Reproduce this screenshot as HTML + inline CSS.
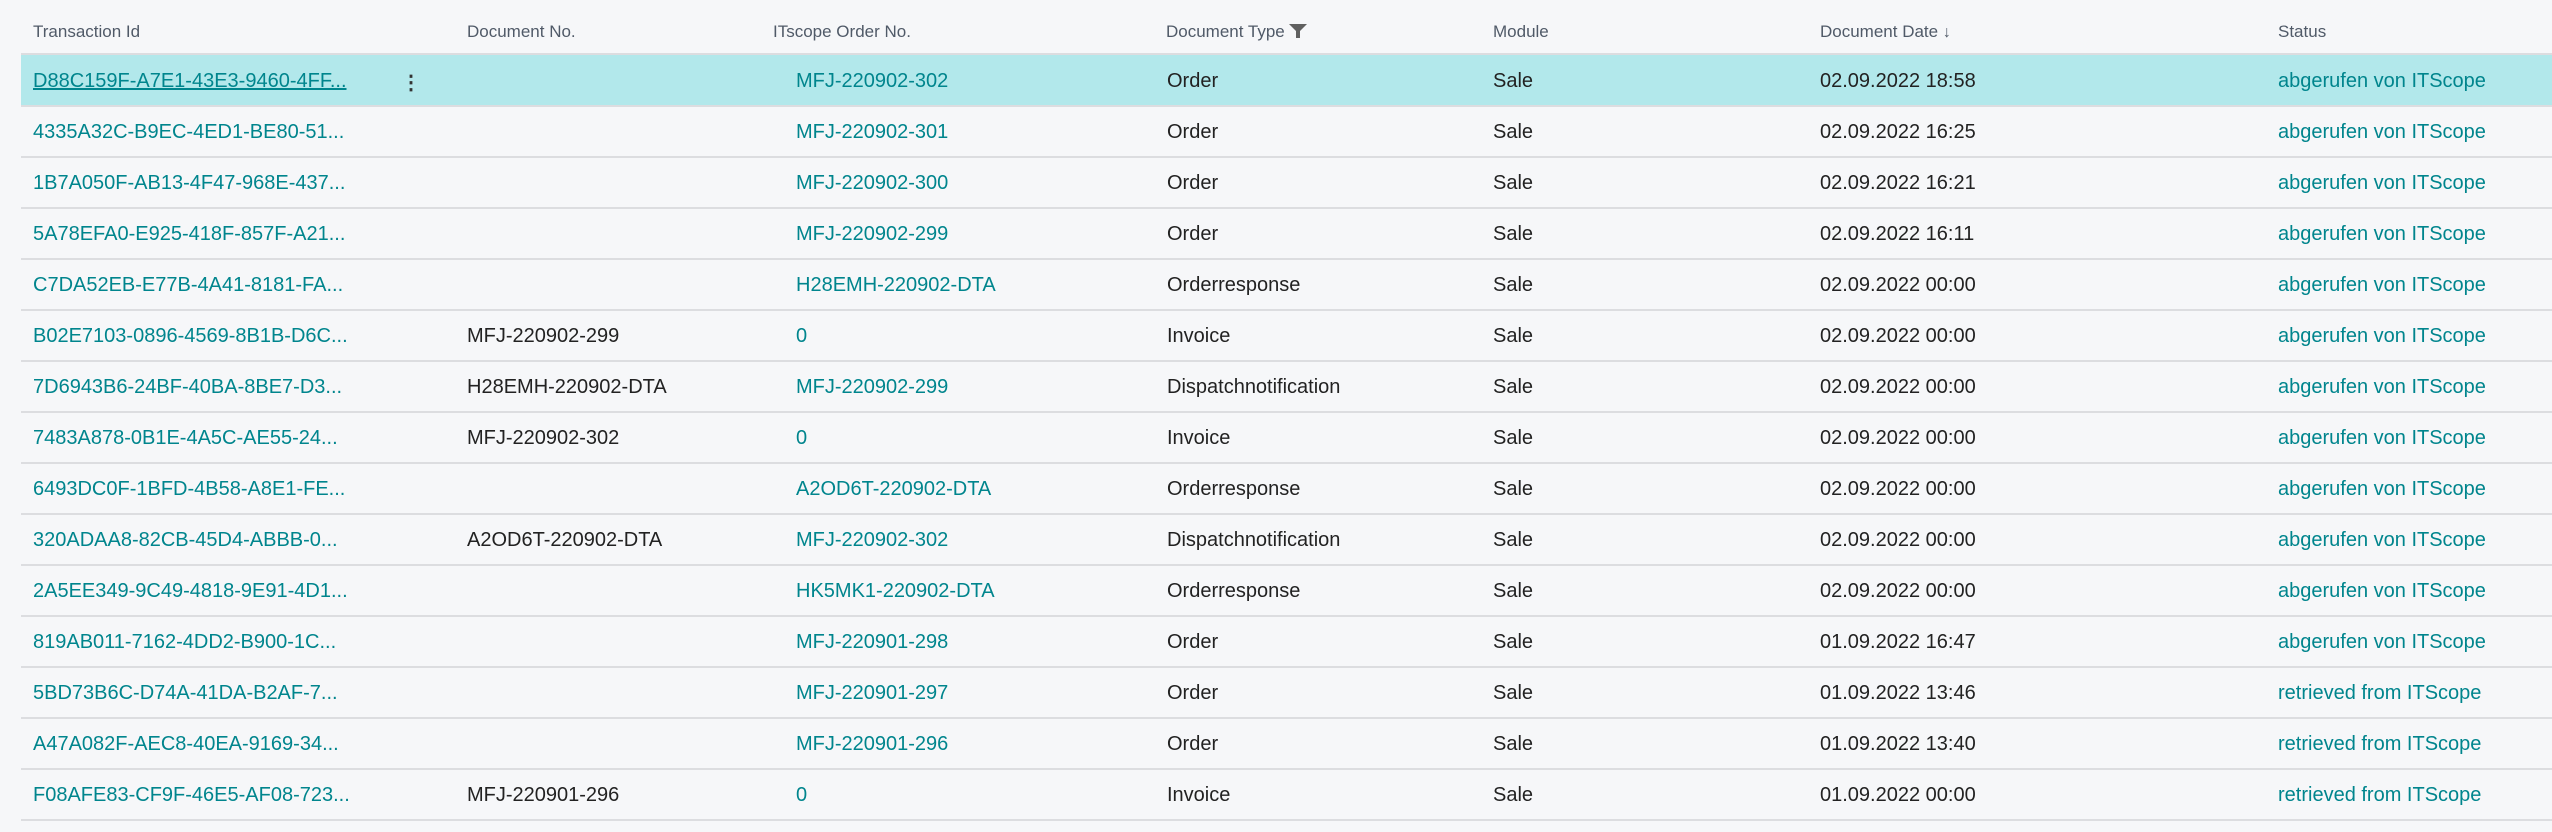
<!DOCTYPE html>
<html><head><meta charset="utf-8"><style>
body{margin:0;width:2552px;height:832px;background:#f6f7f9;font-family:"Liberation Sans",sans-serif;overflow:hidden;position:relative}
.h{position:absolute;top:22px;font-size:17px;color:#505a68}
.r{position:absolute;left:21px;right:0;height:50px;border-bottom:2px solid #dcdde0}
.c{position:absolute;top:15px;font-size:20px;color:#222;white-space:nowrap}
.t{color:#00858d}
.sel{background:#b2e8eb}
</style></head><body>
<div class="h" style="left:33px">Transaction Id</div>
<div class="h" style="left:467px">Document No.</div>
<div class="h" style="left:773px">ITscope Order No.</div>
<div class="h" style="left:1166px">Document Type <svg width="18" height="14" viewBox="0 0 18 14" style="vertical-align:-1px"><path d="M0 0H18L11 7V14H7V7Z" fill="#606060"/></svg></div>
<div class="h" style="left:1493px">Module</div>
<div class="h" style="left:1820px">Document Date <span style="font-size:16px">&#8595;</span></div>
<div class="h" style="left:2278px">Status</div>
<div style="position:absolute;left:21px;right:0;top:53px;border-top:2px solid #dcdde0"></div>
<div id="rows"></div>
<script>
var d=[
["D88C159F-A7E1-43E3-9460-4FF...","","MFJ-220902-302","Order","02.09.2022 18:58","abgerufen von ITScope"],
["4335A32C-B9EC-4ED1-BE80-51...","","MFJ-220902-301","Order","02.09.2022 16:25","abgerufen von ITScope"],
["1B7A050F-AB13-4F47-968E-437...","","MFJ-220902-300","Order","02.09.2022 16:21","abgerufen von ITScope"],
["5A78EFA0-E925-418F-857F-A21...","","MFJ-220902-299","Order","02.09.2022 16:11","abgerufen von ITScope"],
["C7DA52EB-E77B-4A41-8181-FA...","","H28EMH-220902-DTA","Orderresponse","02.09.2022 00:00","abgerufen von ITScope"],
["B02E7103-0896-4569-8B1B-D6C...","MFJ-220902-299","0","Invoice","02.09.2022 00:00","abgerufen von ITScope"],
["7D6943B6-24BF-40BA-8BE7-D3...","H28EMH-220902-DTA","MFJ-220902-299","Dispatchnotification","02.09.2022 00:00","abgerufen von ITScope"],
["7483A878-0B1E-4A5C-AE55-24...","MFJ-220902-302","0","Invoice","02.09.2022 00:00","abgerufen von ITScope"],
["6493DC0F-1BFD-4B58-A8E1-FE...","","A2OD6T-220902-DTA","Orderresponse","02.09.2022 00:00","abgerufen von ITScope"],
["320ADAA8-82CB-45D4-ABBB-0...","A2OD6T-220902-DTA","MFJ-220902-302","Dispatchnotification","02.09.2022 00:00","abgerufen von ITScope"],
["2A5EE349-9C49-4818-9E91-4D1...","","HK5MK1-220902-DTA","Orderresponse","02.09.2022 00:00","abgerufen von ITScope"],
["819AB011-7162-4DD2-B900-1C...","","MFJ-220901-298","Order","01.09.2022 16:47","abgerufen von ITScope"],
["5BD73B6C-D74A-41DA-B2AF-7...","","MFJ-220901-297","Order","01.09.2022 13:46","retrieved from ITScope"],
["A47A082F-AEC8-40EA-9169-34...","","MFJ-220901-296","Order","01.09.2022 13:40","retrieved from ITScope"],
["F08AFE83-CF9F-46E5-AF08-723...","MFJ-220901-296","0","Invoice","01.09.2022 00:00","retrieved from ITScope"]];
var h="";
d.forEach(function(r,i){
var top=55+i*51;
h+='<div class="r'+(i==0?' sel':'')+'" style="top:'+top+'px">'+
'<div class="c t" style="left:12px;'+(i==0?'text-decoration:underline;':'')+'">'+r[0]+'</div>'+
(i==0?'<div class="c" style="left:380px;font-weight:bold;color:#333">&#8942;</div>':'')+
'<div class="c" style="left:446px">'+r[1]+'</div>'+
'<div class="c t" style="left:775px">'+r[2]+'</div>'+
'<div class="c" style="left:1146px">'+r[3]+'</div>'+
'<div class="c" style="left:1472px">Sale</div>'+
'<div class="c" style="left:1799px">'+r[4]+'</div>'+
'<div class="c t" style="left:2257px">'+r[5]+'</div></div>';
});
document.getElementById("rows").innerHTML=h;
</script>
</body></html>
